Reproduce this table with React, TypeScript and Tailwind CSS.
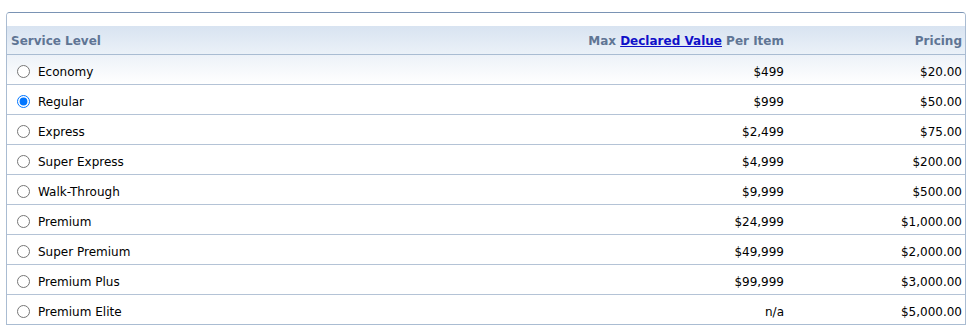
import React from 'react';

interface ServiceLevel {
    name: string;
    maxValue: string;
    price: string;
}

const levels: ServiceLevel[] = [
    { name: 'Economy', maxValue: '$499', price: '$20.00' },
    { name: 'Regular', maxValue: '$999', price: '$50.00' },
    { name: 'Express', maxValue: '$2,499', price: '$75.00' },
    { name: 'Super Express', maxValue: '$4,999', price: '$200.00' },
    { name: 'Walk-Through', maxValue: '$9,999', price: '$500.00' },
    { name: 'Premium', maxValue: '$24,999', price: '$1,000.00' },
    { name: 'Super Premium', maxValue: '$49,999', price: '$2,000.00' },
    { name: 'Premium Plus', maxValue: '$99,999', price: '$3,000.00' },
    { name: 'Premium Elite', maxValue: 'n/a', price: '$5,000.00' },
];

const App: React.FC = () => {
    return (
        <div className="bg-white w-[979px] h-[333px] pt-[12px] pl-[6px] font-['DejaVu_Sans','Verdana',sans-serif] text-[12px]">
            <div className="w-[960px] border border-[#aabcd2] border-t-[#7a93b4] rounded-t-[4px] overflow-hidden">
                <div className="h-[13px] bg-white"></div>
                <div className="h-[29px] pt-[2px] grid grid-cols-[1fr_300px_177px] items-center border-b border-[#a9bcd2] bg-gradient-to-b from-[#d8e3f1] to-[#ebf1f8] font-bold text-[#5f7594]">
                    <div className="pl-[4px]">Service Level</div>
                    <div className="text-right pr-[4px]">
                        Max <a href="#" className="text-[#1010c8] underline">Declared Value</a> Per Item
                    </div>
                    <div className="text-right pr-[3px]">Pricing</div>
                </div>
                {levels.map((level, i) => (
                    <div
                        key={level.name}
                        className={`grid grid-cols-[1fr_300px_177px] items-center pt-[4px] text-black ${i < levels.length - 1 ? 'h-[30px] border-b border-[#b4c3d6]' : 'h-[29px]'} ${i === 0 ? 'bg-gradient-to-b from-[#edf2f8] to-white' : 'bg-white'}`}
                    >
                        <label className="flex items-center pl-[10px] gap-[8px]">
                            <input
                                type="radio"
                                name="serviceLevel"
                                defaultChecked={level.name === 'Regular'}
                                className="m-0 w-[13px] h-[13px]"
                            />
                            <span>{level.name}</span>
                        </label>
                        <div className="text-right pr-[4px]">{level.maxValue}</div>
                        <div className="text-right pr-[3px]">{level.price}</div>
                    </div>
                ))}
            </div>
        </div>
    );
};

export default App;
